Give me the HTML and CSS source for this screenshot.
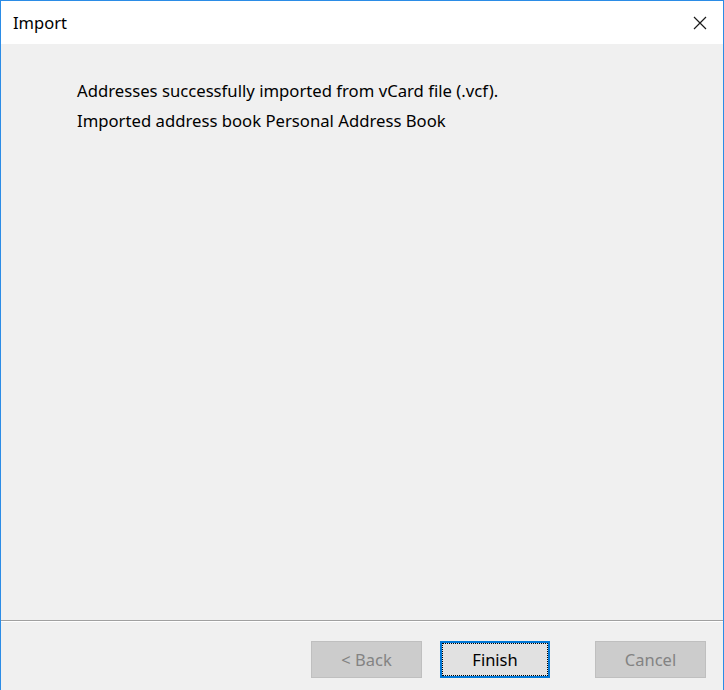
FILE: index.html
```html
<!DOCTYPE html>
<html>
<head>
<meta charset="utf-8">
<link rel="stylesheet" href="styles.css">
</head>
<body>
<div class="window">
  <div class="titlebar">
    <span class="title">Import</span>
    <span class="close">
      <svg width="14" height="14" viewBox="0 0 14 14"><path d="M1 1 L13 13 M13 1 L1 13" stroke="#1a1a1a" stroke-width="1.2" fill="none"/></svg>
    </span>
  </div>
  <div class="content">
    <p class="line">Addresses successfully imported from vCard file (.vcf).</p>
    <p class="line">Imported address book Personal Address Book</p>
  </div>
  <div class="footer">
    <button class="btn disabled">&lt; Back</button>
    <button class="btn primary"><span class="focus">Finish</span></button>
    <button class="btn disabled cancel">Cancel</button>
  </div>
</div>
</body>
</html>
```
FILE: styles.css
```css
html, body {
  margin: 0;
  padding: 0;
}
body {
  width: 724px;
  height: 690px;
  font-family: "Noto Sans", "Open Sans", sans-serif;
  font-size: 16.7px;
  color: #000;
}
.window {
  box-sizing: border-box;
  width: 724px;
  height: 690px;
  border: 1px solid #2b8ce6;
  border-bottom: none;
  display: flex;
  flex-direction: column;
  background: #f0f0f0;
}
.titlebar {
  height: 43px;
  flex: none;
  background: #fff;
  display: flex;
  align-items: center;
  justify-content: space-between;
  padding: 0 16px 0 12px;
}
.title {
  font-size: 16.5px;
  color: #000;
}
.close {
  display: flex;
  width: 14px;
  height: 14px;
}
.content {
  flex: 1;
  padding: 32px 0 0 76px;
}
.line {
  margin: 0;
  height: 30px;
  line-height: 30px;
}
.footer {
  flex: none;
  border-top: 1px solid #a0a0a0;
  box-shadow: inset 0 1px 0 #fff;
  height: 70px;
  display: flex;
  align-items: flex-start;
  padding: 20px 0 0 310px;
  box-sizing: border-box;
}
.btn {
  box-sizing: border-box;
  width: 111px;
  height: 37px;
  font-family: inherit;
  font-size: 16.5px;
  padding: 0;
  margin: 0;
  background: #e1e1e1;
  border: 1px solid #adadad;
  color: #000;
}
.btn.disabled {
  background: #cccccc;
  border-color: #bfbfbf;
  color: #838383;
}
.btn.primary {
  margin-left: 18px;
  width: 110px;
  border: 2px solid #0078d7;
  display: flex;
  padding: 0;
}
.focus {
  flex: 1;
  border: 1px dotted #000;
  display: flex;
  align-items: center;
  justify-content: center;
}
.btn.cancel {
  margin-left: 45px;
}
```
